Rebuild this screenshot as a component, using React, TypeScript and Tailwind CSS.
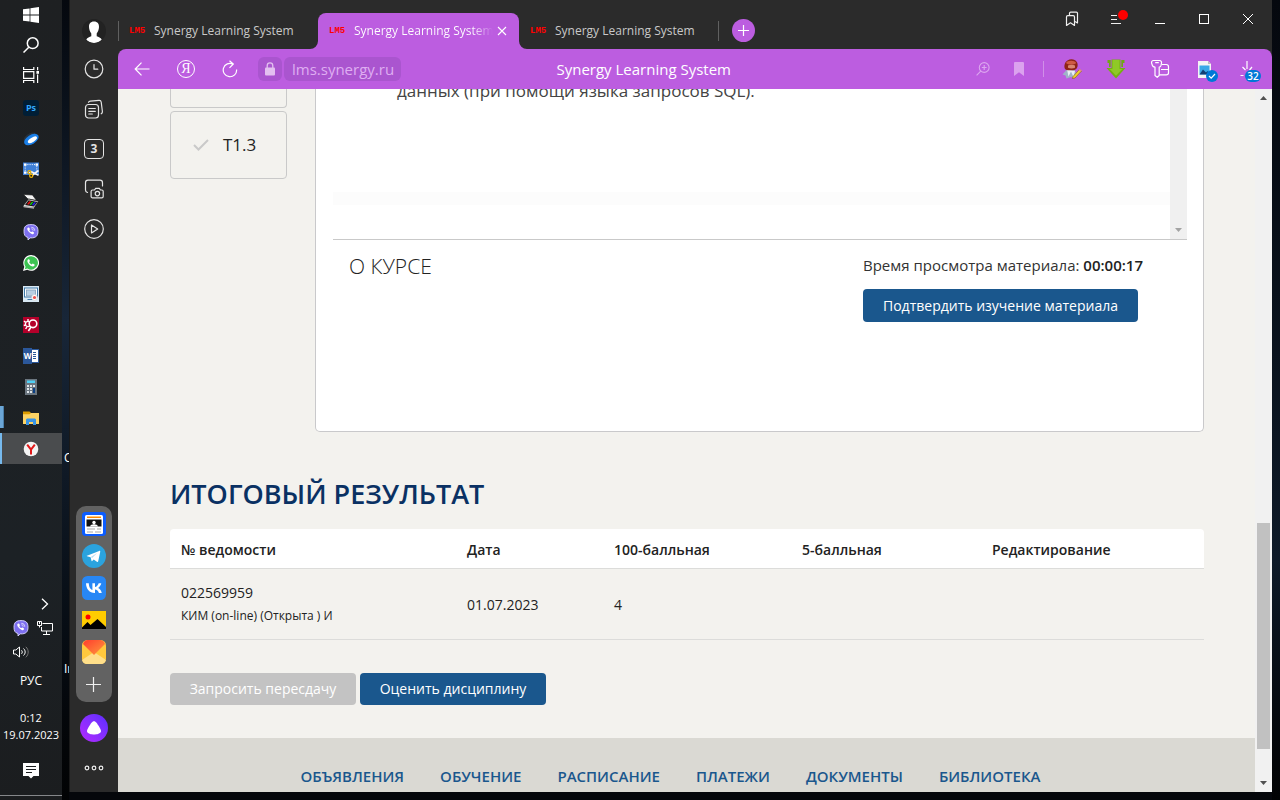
import React from "react";

const UI = "font-['Open_Sans','Noto_Sans',sans-serif]";

type IconProps = { className?: string };

/* ---------- taskbar icons ---------- */

const WindowsLogo = () => (
  <svg viewBox="0 0 16 16" className="size-4" fill="#fff">
    <path d="M0 2.3 6.6 1.4v6.2H0zM7.4 1.3 16 0v7.6H7.4zM0 8.4h6.6v6.2L0 13.7zM7.4 8.4H16V16l-8.6-1.2z" />
  </svg>
);
const SearchGlass = () => (
  <svg viewBox="0 0 16 16" className="size-4" fill="none" stroke="#fff" strokeWidth="1.5">
    <circle cx="9.7" cy="6.2" r="5.4" />
    <path d="M5.8 10.2.5 15.5" />
  </svg>
);
const TaskView = () => (
  <svg viewBox="0 0 16 16" className="size-4" fill="none" stroke="#fff" strokeWidth="1.2">
    <path d="M.6 0v2.5h10.2V0M.6 16v-2.5h10.2V16M.6 4.6h10.2v6.8H.6zM14.6 0v3.2M14.6 7.6V16" />
    <rect x="13.4" y="4" width="2.6" height="2.8" fill="#fff" stroke="none" />
  </svg>
);
const Photoshop = () => (
  <span className="flex size-4 items-center justify-center rounded-[3px] bg-[#001e36] text-[9px] font-bold leading-none text-[#31a8ff]">
    Ps
  </span>
);
const YandexDisk = () => (
  <svg viewBox="0 0 16 16" className="size-4">
    <ellipse cx="7" cy="6.6" rx="7" ry="4" transform="rotate(-32 7 6.6)" fill="#26303b" />
    <ellipse cx="8.4" cy="8.6" rx="8" ry="4.6" transform="rotate(-32 8.4 8.6)" fill="#1a7fe8" />
    <ellipse cx="9.4" cy="8.8" rx="5.2" ry="2.2" transform="rotate(-32 9.4 8.8)" fill="#fff" />
  </svg>
);
const Snip = () => (
  <svg viewBox="0 0 16 16" className="size-4">
    <rect y=".5" width="16" height="12.5" fill="#3f7fd6" />
    <rect x="2.2" y="2.6" width="11.6" height="8" fill="none" stroke="#fff" strokeDasharray="1 1.2" />
    <path d="M1 1.4h2.4v2.4H1zM12.6 1.4H15v2.4h-2.4zM1 9.4h2.4v2.4H1z" fill="#fff" />
    <path d="m8 9.500 7.500 3.900M9.500 13l6-4.500" stroke="#f4f4f4" strokeWidth="1.6" />
    <circle cx="6.4" cy="10.200" r="1.5" fill="none" stroke="#f0b400" strokeWidth="1.200" />
    <circle cx="8.2" cy="13.800" r="1.6" fill="none" stroke="#f0b400" strokeWidth="1.200" />
  </svg>
);
const Scanner = () => (
  <svg viewBox="0 0 16 16" className="size-4">
    <path d="M.5 1.500 9.500 2 13.500 7.500 5 6z" fill="#f4f4f4" stroke="#111" strokeWidth=".6" />
    <path d="m.5 12.500 5-6.500 10 2.200-4.500 6.800L.5 14z" fill="#e4e4e4" stroke="#111" strokeWidth=".6" />
    <path d="M2 12 5.500 7.200l9 1.800-3.700 4.600z" fill="#151515" />
    <path d="m4 11.200 2.400-3 1.800.4-2.400 2.900z" fill="#e11" />
    <path d="m6.500 11.700 2.400-3 1.500.3-2.300 3z" fill="#1c1" />
    <path d="m8.900 12.100 2.300-2.900 1.800.4-2.400 2.900z" fill="#22e" />
    <path d="m.5 13 10.500 1.200v1.500L.5 14.200z" fill="#aaa" />
  </svg>
);
const Viber = ({ className = "size-4" }: IconProps) => (
  <svg viewBox="0 0 16 16" className={className}>
    <path
      d="M8 .6c4.800 0 7 1.700 7 6.600s-2.200 6.700-7 6.700h-.8L5 16v-2.500C2 12.800 1 10.800 1 7.200 1 2.300 3.200.6 8 .6z"
      fill="#7d6ff0"
      stroke="#dcd8ff"
      strokeWidth=".9"
    />
    <path
      d="M5.300 3.600c.5-.3.900 0 1.500 1.100.3.600 0 .9-.4 1.300-.3.500 1.300 2.300 1.900 2 .5-.3.700-.8 1.300-.5 1.300.7 1.700 1.100 1.400 1.700-.5 1-1.200 1.400-2.200.9-2.300-1-4.200-3.100-4.600-5 0-.7.400-1.200 1.100-1.500z"
      fill="#fff"
    />
    <path d="M8.300 3.300c2.300 0 3.400 1.300 3.400 3.400M8.400 4.800c1.200 0 1.800.7 1.800 1.800" fill="none" stroke="#fff" strokeWidth=".7" />
  </svg>
);
const WhatsApp = () => (
  <svg viewBox="0 0 16 16" className="size-4">
    <path d="M8.100 0A7.900 7.900 0 0 0 1.300 11.800L0 16l4.300-1.200A7.900 7.900 0 1 0 8.100 0z" fill="#fff" />
    <path d="M8.100 1.200a6.700 6.700 0 0 0-5.500 10.500l-.8 2.500 2.600-.8A6.700 6.700 0 1 0 8.100 1.200z" fill="#3cc352" />
    <path
      d="M5.400 4.300c.5-.2.900-.1 1.200.8l.3.900c0 .4-.8.900-.7 1.200.5 1 1.400 1.800 2.400 2.200.4.100.8-.9 1.200-.8l1.700.8c.3.300 0 1.300-.4 1.600-1.200 1-3.300 0-4.700-1.300C5 8.400 4.100 6.800 4.400 5.600c.2-.6.500-1.100 1-1.300z"
      fill="#fff"
    />
  </svg>
);
const ScreenRec = () => (
  <svg viewBox="0 0 16 16" className="size-4">
    <rect width="16" height="16" fill="#d9e9f4" />
    <rect x="1.500" y="2" width="13" height="9" fill="#fff" stroke="#3d78a8" />
    <rect x="3.500" y="4" width="9" height="6" fill="#b8cfe2" stroke="#7d9cb8" strokeWidth=".8" />
    <path d="M4.500 13.500h6" stroke="#3d78a8" />
    <circle cx="11.500" cy="11.500" r="2.900" fill="#fff" stroke="#c8c8c8" strokeWidth=".6" />
    <circle cx="11.500" cy="11.500" r="1.600" fill="#e8514b" />
  </svg>
);
const GearBox = () => (
  <svg viewBox="0 0 16 16" className="size-4">
    <rect width="16" height="16" fill="#b4002a" />
    <circle cx="5" cy="7" r="2.600" fill="none" stroke="#fff" strokeWidth="1.300" />
    <path d="M5 2v2M1 4l1.600 1.400M.8 8.500l2-.5M2.600 12l1.200-1.900" stroke="#fff" strokeWidth="1.400" />
    <circle cx="10" cy="6.800" r="3.800" fill="#b4002a" stroke="#fff" strokeWidth="1.600" />
    <path d="m8 10-2.600 4" stroke="#fff" strokeWidth="1.600" />
  </svg>
);
const Word = () => (
  <span className="flex h-4 w-4 items-center">
    <span className="flex h-4 w-[9px] items-center justify-center bg-[#2b579a] text-[8px] font-bold leading-none text-white">W</span>
    <span className="flex h-[14px] flex-1 flex-col justify-between border border-l-0 border-[#2b579a] bg-white py-0.5 pl-px pr-0.5">
      <span className="h-px bg-[#2b579a]" />
      <span className="h-px bg-[#2b579a]" />
      <span className="h-px bg-[#2b579a]" />
      <span className="h-px bg-[#2b579a]" />
    </span>
  </span>
);
const Calc = () => (
  <svg viewBox="0 0 12 16" className="h-4 w-3">
    <rect width="12" height="16" fill="#6b7680" />
    <rect x="2" y="1.500" width="8" height="2.500" fill="#4fd0f5" />
    <path d="M2 6h2v2H2zM5 6h2v2H5zM8 6h2v2H8zM2 9h2v2H2zM5 9h2v2H5zM2 12h2v2H2zM5 12h2v2H5z" fill="#dfe5ea" />
    <path d="M8 9h2v5H8z" fill="#0b3f83" />
  </svg>
);
const Folder = () => (
  <svg viewBox="0 0 16 14" className="h-3.5 w-4">
    <path d="M0 2h16v11H0z" fill="#fdd364" />
    <path d="M0 .5h6.500L8 2 6.500 3.200H0z" fill="#dd9c00" />
    <path d="M3 14V8.500L4 7.500h8l1 1V14h-3v-3H6v3z" fill="#3a94e4" />
  </svg>
);
const YBrowser = () => (
  <svg viewBox="0 0 16 16" className="size-4">
    <circle cx="8" cy="8" r="7.300" fill="#f4f4f4" />
    <path d="M4.200 3.600 8 8.600v4.900M11.800 3.600 8 8.600" fill="none" stroke="#e0191a" strokeWidth="2" />
  </svg>
);

const taskApps: { name: string; icon: React.ReactNode; state?: "open" | "active" }[] = [
  { name: "Photoshop", icon: <Photoshop /> },
  { name: "Диск", icon: <YandexDisk /> },
  { name: "Ножницы", icon: <Snip /> },
  { name: "Сканер", icon: <Scanner /> },
  { name: "Viber", icon: <Viber /> },
  { name: "WhatsApp", icon: <WhatsApp /> },
  { name: "Запись экрана", icon: <ScreenRec /> },
  { name: "Настройка", icon: <GearBox /> },
  { name: "Word", icon: <Word /> },
  { name: "Калькулятор", icon: <Calc /> },
  { name: "Проводник", icon: <Folder />, state: "open" },
  { name: "Браузер", icon: <YBrowser />, state: "active" },
];

function Taskbar() {
  return (
    <nav aria-label="Панель задач" className="flex w-[62px] shrink-0 flex-col bg-linear-to-b from-[#1e2022] via-[#1c2125] via-70% to-[#1b1d1f] text-white">
      {[
        { name: "Пуск", icon: <WindowsLogo /> },
        { name: "Поиск", icon: <SearchGlass /> },
        { name: "Представление задач", icon: <TaskView /> },
      ].map((b) => (
        <button key={b.name} aria-label={b.name} className="flex h-[30px] items-center justify-center">
          {b.icon}
        </button>
      ))}
      <div className="mt-0.5 flex flex-col">
        {taskApps.map((a) => (
          <button
            key={a.name}
            aria-label={a.name}
            className={
              a.state === "active"
                ? "flex h-[31px] items-center justify-center border-l-2 border-[#76b9ed] bg-[#4a4c4e] pr-0.5"
                : "relative flex h-[31px] items-center justify-center"
            }
          >
            {a.state === "open" && <span className="absolute left-0 top-1 h-[22px] w-1 border-r border-[#4b7ea8] bg-[#6ba6d6]" />}
            {a.icon}
          </button>
        ))}
      </div>

      <div className="mt-auto flex flex-col items-center">
        <button aria-label="Скрытые значки" className="ml-7 flex h-6 items-center">
          <svg viewBox="0 0 8 12" className="h-3 w-2" fill="none" stroke="#fff" strokeWidth="1.300">
            <path d="m1 .8 5.500 5.200L1 11.200" />
          </svg>
        </button>
        <div className="flex h-6 items-center gap-2 pl-1">
          <Viber />
          <svg viewBox="0 0 16 14" className="h-3.5 w-4" fill="none" stroke="#fff">
            <path d="M5.500 2.500h10v7.500h-11V6M9.500 10v3M6 13.500h7M.5.500h4v4h-4zM2.500 4.500v2M2.500 0v3" />
          </svg>
        </div>
        <div className="flex h-6 items-center pr-5">
          <svg viewBox="0 0 17 12" className="h-3 w-[17px]" fill="none" stroke="#fff">
            <path d="M.5 4h2.300l3.700-3v10L2.800 8H.500zM8.500 4.300c1 1 1 2.500 0 3.500M10.500 2.500c2.200 2 2.200 5 0 7" />
            <path d="M12.800.8c3.200 3 3.200 7.500 0 10.500" stroke="#777" />
          </svg>
        </div>
        <span className="mt-px text-[12px] leading-8">РУС</span>
        <div className="mt-3 flex flex-col items-center text-[11px] leading-[17px]">
          <span>0:12</span>
          <span>19.07.2023</span>
        </div>
        <button aria-label="Уведомления" className="mt-5 flex h-4">
          <svg viewBox="0 0 16 16" className="size-4">
            <path d="M0 0h16v13h-5.500L8 15.500 5.500 13H0z" fill="#fff" />
            <path d="M3 3.500h10M3 6.500h10M3 9.500h6" stroke="#1b1d1f" />
          </svg>
        </button>
        <span className="mb-1 mt-4 h-px w-full bg-[#85878a]" />
      </div>
    </nav>
  );
}

/* ---------- browser side panel ---------- */

const SideIcon = ({ children }: { children: React.ReactNode }) => (
  <svg viewBox="0 0 20 20" className="size-5" fill="none" stroke="#e4e4e4" strokeWidth="1.200" strokeLinecap="round" strokeLinejoin="round">
    {children}
  </svg>
);

const sideTools = [
  {
    name: "История",
    icon: (
      <SideIcon>
        <circle cx="10" cy="10" r="8.800" />
        <path d="M10 5.500v4.700h3.800" />
      </SideIcon>
    ),
  },
  {
    name: "Коллекции",
    icon: (
      <SideIcon>
        <rect x="1.500" y="5.500" width="13" height="13.500" rx="3" />
        <path d="M4.500 3.300c.4-.7 1-1 1.800-1.100l8.700-.9c1.300-.1 2 .5 2.200 1.700l1.200 9.500c.1 1-.3 1.800-1.200 2.300M4.800 9.500h6.500M4.800 12.300h6.500M4.800 15h3.500" />
      </SideIcon>
    ),
  },
  {
    name: "Вкладки",
    icon: <span className="flex size-5 items-center justify-center rounded-[4px] border border-[#e4e4e4] text-[12px] font-bold leading-none text-[#e4e4e4]">3</span>,
  },
  {
    name: "Скриншот",
    icon: (
      <SideIcon>
        <path d="M3.500 13.500c-1.300-.4-2-1.200-2-2.600V3.800C1.500 2.200 2.400 1.200 4 1.200h12c1.600 0 2.500 1 2.500 2.600V7" />
        <path d="M8.500 11h2l1.200-1.700h3.600l1.200 1.700h1.300c.8 0 1.400.6 1.400 1.400v5c0 .8-.6 1.400-1.400 1.400H8.500c-.8 0-1.400-.6-1.400-1.400v-5c0-.8.6-1.400 1.400-1.400z" />
        <circle cx="13.400" cy="14.600" r="2.200" />
      </SideIcon>
    ),
  },
  {
    name: "Видео",
    icon: (
      <SideIcon>
        <circle cx="10" cy="10" r="9.300" />
        <path d="M7.500 6v8l6.200-4z" />
      </SideIcon>
    ),
  },
];

const dockApps = [
  {
    name: "Новости",
    icon: (
      <svg viewBox="0 0 24 24" className="size-6">
        <rect width="24" height="24" rx="3.500" fill="#0b5cff" />
        <rect x="3" y="3" width="18" height="19" rx="1.500" fill="#fff" />
        <path d="M5 4.500h14V6H5z" fill="#ff8a00" />
        <path d="M4.500 7.500h15v7h-15z" fill="#111" />
        <circle cx="12" cy="10.500" r="1.700" fill="#fff" />
        <path d="M8 14.500c.5-3 7.500-3 8 0z" fill="#fff" />
        <path d="M5 17h8M5 20h6M15 17h4M13 20h6" stroke="#aaa" strokeWidth="1.200" />
      </svg>
    ),
  },
  {
    name: "Telegram",
    icon: (
      <svg viewBox="0 0 24 24" className="size-6">
        <circle cx="12" cy="12" r="12" fill="#2ba3de" />
        <path d="m5 11.800 12.200-4.900c.7-.2 1.200.2 1 1.100l-2 9.300c-.2.800-.7.900-1.300.5l-3.200-2.300-1.500 1.500c-.3.300-.6.300-.7-.2l-.9-3.500-3.500-1c-.6-.2-.6-.4-.1-.5z" fill="#fff" />
        <path d="m8.800 13 6.700-4.200-5.400 5.300z" fill="#b8dcf0" />
      </svg>
    ),
  },
  {
    name: "ВКонтакте",
    icon: (
      <svg viewBox="0 0 24 24" className="size-6">
        <rect width="24" height="24" rx="5.500" fill="#2787f5" />
        <path
          d="M12.800 17C7.400 17 4.200 13.300 4 7.300h2.800c.1 4.400 2 6.200 3.600 6.600V7.300H13v3.800c1.500-.2 3.200-1.900 3.700-3.800h2.600c-.4 2.200-2 3.900-3.200 4.600 1.200.5 3 2 3.700 5.100h-2.900c-.6-1.900-2.100-3.200-3.900-3.400V17z"
          fill="#fff"
        />
      </svg>
    ),
  },
  {
    name: "Картинки",
    icon: (
      <svg viewBox="0 0 24 24" className="size-6">
        <path d="M0 3h24v18H0z" fill="#fc0" />
        <path d="M0 21v-1.500L5.500 14l3 3L15.500 11 24 19v2z" fill="#000" />
        <circle cx="6" cy="9" r="2.500" fill="#f00" />
      </svg>
    ),
  },
  {
    name: "Почта",
    icon: (
      <svg viewBox="0 0 24 24" className="size-6">
        <defs>
          <linearGradient id="mail" x1="0" y1="0" x2="1" y2="1">
            <stop offset="0" stopColor="#ff3d2e" />
            <stop offset="1" stopColor="#ff9a3d" />
          </linearGradient>
        </defs>
        <rect width="24" height="24" rx="5.500" fill="#ffc83d" />
        <path d="M0 20 12 12 24 20a5.500 5.500 0 0 1-5.500 4h-13A5.500 5.500 0 0 1 0 20z" fill="#ffdf8a" />
        <path d="M1 4A5.500 5.500 0 0 1 5.500 0h13A5.500 5.500 0 0 1 23 4L12 15z" fill="url(#mail)" />
      </svg>
    ),
  },
  {
    name: "Добавить",
    icon: (
      <svg viewBox="0 0 24 24" className="size-6" stroke="#f0f0f0" strokeWidth="1.200">
        <path d="M11.500 5v15M4 12.500h15" />
      </svg>
    ),
  },
];

function SidePanel() {
  return (
    <aside className="flex w-12 shrink-0 flex-col items-center bg-[#2b2b2b]">
      <button aria-label="Профиль" className="mt-[19px] flex size-6 items-center justify-center overflow-hidden rounded-full bg-[#222]">
        <svg viewBox="0 0 24 24" className="size-6" fill="#fff">
          <path d="M12 2.500c3.600 0 5.200 2.300 5 5.600-.1 2.600-.9 4.800-2.300 6.400v2.800c1.800.8 4 1.500 5 3.200C17.800 22.800 15 24 12 24s-5.800-1.200-7.700-3.500c1-1.700 3.200-2.400 5-3.200v-2.800C7.900 12.900 7.100 10.700 7 8.100c-.2-3.300 1.400-5.600 5-5.600z" />
        </svg>
      </button>
      <div className="mt-4 flex flex-col gap-5">
        {sideTools.map((t) => (
          <button key={t.name} aria-label={t.name} className="flex size-5 items-center justify-center">
            {t.icon}
          </button>
        ))}
      </div>
      <div className="mt-auto flex w-9 flex-col items-center gap-2 rounded-[10px] bg-[#626262] px-1.5 py-1.5">
        {dockApps.map((a) => (
          <button key={a.name} aria-label={a.name} className="flex size-6">
            {a.icon}
          </button>
        ))}
      </div>
      <button aria-label="Алиса" className="mt-3 flex size-7 items-center justify-center rounded-full bg-linear-to-bl from-[#5a2bff] to-[#b425ff]">
        <svg viewBox="0 0 14 14" className="size-3.5" fill="#fff">
          <path d="M7 .3c1 0 1.800.6 2.500 1.500 1.500 2 4.500 6.400 4.500 8.400 0 2.400-4.500 3.300-7 3.300s-7-.9-7-3.300c0-2 3-6.400 4.500-8.400C5.200.9 6 .3 7 .3z" />
        </svg>
      </button>
      <button aria-label="Ещё" className="mb-[21px] mt-[23px] flex">
        <svg viewBox="0 0 20 6" className="h-1.5 w-5" fill="none" stroke="#f0f0f0" strokeWidth="1.200">
          <circle cx="3" cy="3" r="1.800" />
          <circle cx="10" cy="3" r="1.800" />
          <circle cx="17" cy="3" r="1.800" />
        </svg>
      </button>
    </aside>
  );
}

/* ---------- tabs and toolbar ---------- */

const Favicon = () => (
  <span className="w-4 shrink-0 font-['Liberation_Mono',monospace] text-[9px] font-bold leading-none text-[#f00]">LM5</span>
);

function Tab({ active = false }: { active?: boolean }) {
  return (
    <div
      role="tab"
      aria-selected={active}
      className={
        active
          ? "relative mt-[13px] flex w-[201px] items-center rounded-t-[8px] bg-[#bc5de0] pl-[11px] pr-3 text-white"
          : "mt-[13px] flex w-[200px] items-center pl-[11px] text-[#c9c9c9]"
      }
    >
      {active && (
        <>
          <svg viewBox="0 0 8 8" className="absolute -left-2 bottom-0 size-2" fill="#bc5de0">
            <path d="M8 0v8H0a8 8 0 0 0 8-8z" />
          </svg>
          <svg viewBox="0 0 8 8" className="absolute -right-2 bottom-0 size-2" fill="#bc5de0">
            <path d="M0 0v8h8a8 8 0 0 1-8-8z" />
          </svg>
        </>
      )}
      <Favicon />
      <span
        className={
          active
            ? "ml-[9px] min-w-0 flex-1 overflow-hidden whitespace-nowrap bg-linear-to-r from-white from-85% to-transparent bg-clip-text text-[12px] leading-5 text-transparent"
            : "ml-[9px] whitespace-nowrap text-[12px] leading-5"
        }
      >
        Synergy Learning System
      </span>
      {active && (
        <button aria-label="Закрыть вкладку" className="ml-1 flex">
          <svg viewBox="0 0 10 10" className="size-2.5" stroke="#fff" strokeWidth="1.100">
            <path d="m1 1 8 8M9 1 1 9" />
          </svg>
        </button>
      )}
    </div>
  );
}

function TabStrip() {
  return (
    <header className="flex h-[49px] shrink-0 bg-[#2b2b2b]">
      <div className="flex" role="tablist">
        <span className="-mr-px mt-[21px] h-5 w-px bg-[#606060]" />
        <Tab />
        <Tab active />
        <Tab />
      </div>
      <span className="-ml-px mt-[21px] h-5 w-px bg-[#606060]" />
      <button aria-label="Новая вкладка" className="ml-[13px] mt-[19px] flex size-[23px] items-center justify-center rounded-full bg-[#bc5de0]">
        <svg viewBox="0 0 11 11" className="size-[11px]" stroke="#fff" strokeWidth="1.200">
          <path d="M5.500 0v11M0 5.500h11" />
        </svg>
      </button>
      <div className="ml-auto flex h-[38px] pr-0.5">
        <button aria-label="Закладки" className="flex w-11 items-center justify-center">
          <svg viewBox="0 0 14 16" className="h-4 w-3.5" fill="none" stroke="#f0f0f0" strokeWidth="1.200" strokeLinejoin="round">
            <path d="M4.500 4V2.300c0-.7.400-1.200 1.200-1.200h5.600c.8 0 1.200.5 1.200 1.200V12L10 10.600" />
            <path d="M1.500 6c0-.8.500-1.300 1.300-1.300h5.400c.8 0 1.300.5 1.300 1.300v8.400l-4-2.600-4 2.600z" />
          </svg>
        </button>
        <button aria-label="Меню" className="relative flex w-11 items-center justify-center">
          <svg viewBox="0 0 10 9" className="mt-px h-[9px] w-2.5" stroke="#f0f0f0">
            <path d="M0 .5h6M0 4.500h6M0 8.500h10" />
          </svg>
          <span className="absolute right-2.5 top-2.5 size-2.5 rounded-full bg-[#f00]" />
        </button>
        <button aria-label="Свернуть" className="flex w-11 items-center justify-center">
          <span className="mt-2 h-px w-2.5 bg-white" />
        </button>
        <button aria-label="Развернуть" className="flex w-11 items-center justify-center">
          <span className="size-2.5 border border-white" />
        </button>
        <button aria-label="Закрыть" className="flex w-11 items-center justify-center">
          <svg viewBox="0 0 10 10" className="size-2.5" stroke="#fff">
            <path d="m0 0 10 10M10 0 0 10" />
          </svg>
        </button>
      </div>
    </header>
  );
}

function Toolbar() {
  return (
    <div className="flex h-10 shrink-0 items-center rounded-t-[8px] bg-[#bc5de0] pr-0.5 text-white">
      <div className="flex pl-0.5">
        <button aria-label="Назад" className="flex size-11 items-center justify-center">
          <svg viewBox="0 0 16 14" className="h-3.5 w-4" fill="none" stroke="#fff" strokeWidth="1.200">
            <path d="M15.500 7H1.200M7.500.7 1.200 7l6.300 6.300" />
          </svg>
        </button>
        <button aria-label="Яндекс" className="flex size-11 items-center justify-center">
          <span className="flex size-[18px] items-center justify-center rounded-full border border-white font-['Liberation_Serif',serif] text-[14px] leading-none">Я</span>
        </button>
        <button aria-label="Обновить" className="flex size-11 items-center justify-center">
          <svg viewBox="0 0 16 18" className="h-[18px] w-4" fill="none" stroke="#fff" strokeWidth="1.200">
            <path d="M14.600 9.500A6.700 6.700 0 1 1 11 4.100M7.500.8 11.300 4 7.500 7.800" />
          </svg>
        </button>
      </div>
      <button aria-label="Защищённое соединение" className="ml-1.5 flex size-6 items-center justify-center rounded-md bg-[#aa55cf]">
        <svg viewBox="0 0 10 14" className="h-3.5 w-2.5" fill="#e3c0f0">
          <rect y="5.500" width="10" height="8" rx="1" />
          <path d="M2.200 6V3.700a2.800 2.800 0 0 1 5.600 0V6" fill="none" stroke="#e3c0f0" strokeWidth="1.300" />
        </svg>
      </button>
      <a href="#url" className="ml-0.5 flex h-6 w-[117px] items-center rounded-md bg-[#aa55cf] pl-2 text-[15px] leading-6 text-[#dfaef2]">
        lms.synergy.ru
      </a>
      <span className="ml-auto pl-4 text-[15px] leading-6">Synergy Learning System</span>
      <div className="ml-[234px] flex h-10 items-center">
        <button aria-label="Масштаб" className="flex w-9 items-center justify-center">
          <svg viewBox="0 0 14 14" className="size-3.5" fill="none" stroke="#dca6ef" strokeWidth="1.100">
            <circle cx="8.200" cy="5.500" r="4.900" />
            <path d="M4.700 9.200.6 13.400M5.800 5.500h4.800M8.200 3.100v4.800" />
          </svg>
        </button>
        <button aria-label="Добавить закладку" className="flex w-9 items-center justify-center">
          <svg viewBox="0 0 10 14" className="h-3.5 w-2.5" fill="#dba2ee">
            <path d="M0 1.200C0 .5.500 0 1.200 0h7.600C9.500 0 10 .5 10 1.200V14L5 10.200 0 14z" />
          </svg>
        </button>
        <span className="mx-1.5 h-4 w-px bg-[#d08fe8]" />
        <button aria-label="Расширение" className="flex w-11 items-center justify-center">
          <svg viewBox="0 0 20 20" className="size-5">
            <path d="M.5 15.500 4.500 11h8l3 6-3.500 2-3-1-4.500 1.500-1-3z" fill="#9fb2c8" />
            <path d="m5 10.500 1.500 7 2.500-5 2.500 5.500 1.500-6z" fill="#e9eef5" />
            <path d="M2.500 8.500C2 5.500 3.500.3 9.500.2c5 0 6.800 4 6 7.300-.6 2.600-2.500 3.700-4.500 3.700H6c-2 0-3.200-1-3.500-2.700z" fill="#8f2417" />
            <path d="M4 4C5 1.300 12.500.8 14.200 4c-2 2-8 2-10.200 0z" fill="#cf5a43" />
            <path d="M6 6.500c2-1 5-1 7 0v2.300c-2 .8-5 .8-7 0z" fill="#d98670" />
            <path d="m11 17.500 6.500-7.200 2 1.700L13 19l-2.600.6z" fill="#f2cc2e" stroke="#7a6310" strokeWidth=".6" />
            <path d="m16.700 11 1-1.200 2.100 1.800-1 1.200z" fill="#e58a8a" />
          </svg>
        </button>
        <button aria-label="Загрузить" className="flex w-11 items-center justify-center">
          <svg viewBox="0 0 20 20" className="size-5">
            <path d="M1.500 1h3.200v7H3V4H1.500zM18.500 1h-3.200v7H17V4h1.500z" fill="#6fa814" />
            <path d="M5.500.5h9v8.500h5L10 19.500.5 9h5z" fill="#74b013" />
            <path d="M6.500 1h7v9h2.800L10 16.800 3.700 10h2.800z" fill="#8fc926" />
          </svg>
        </button>
        <button aria-label="Пароли" className="flex w-11 items-center justify-center">
          <svg viewBox="0 0 20 20" className="size-5" fill="none" stroke="#fff" strokeWidth="1.200" strokeLinejoin="round">
            <path d="M3.500 1.500h6c1.500 0 2.300 1.200 2 2.600l-.5 2.400c-.2 1-.8 1.500-1.800 1.700v8.300l-2 1.800-2.200-1.800V8.200c-1.500-.2-2.300-.8-2.600-1.700l-.8-2.400c-.3-1.400.5-2.600 1.900-2.600zM5.200 3.600h3.600" />
            <path d="M11.700 5.500h4.500c1.500 0 2.300.8 2.300 2.200v6c0 1.400-.8 2.100-2.300 2.100H9.500M11 10.500h7.500" />
          </svg>
        </button>
        <button aria-label="Изображение" className="relative flex w-11 items-center justify-center">
          <svg viewBox="0 0 13 17" className="h-[17px] w-[13px]">
            <path d="M0 0h10l3 3v14H0z" fill="#f4f4f4" />
            <path d="M10 0v3h3z" fill="#bbb" />
            <path d="M1.500 4.500h10v9h-10z" fill="#39a9e8" />
            <path d="m1.500 13.500 3.500-5 3 3 1.500-1.500 2 3.500z" fill="#123f73" />
          </svg>
          <span className="absolute -bottom-1 left-6 flex size-3 items-center justify-center rounded-full bg-[#0078d7]">
            <svg viewBox="0 0 8 8" className="size-2" fill="none" stroke="#fff" strokeWidth="1.200">
              <path d="m1 4 2.200 2.200L7 2" />
            </svg>
          </span>
        </button>
        <button aria-label="Загрузки" className="relative flex w-11 items-center justify-center">
          <svg viewBox="0 0 16 18" className="h-[18px] w-4" fill="none" stroke="#fff" strokeWidth="1.200">
            <path d="M7 1v8M2.500 7l3 3M12 7l-2.500 3M.5 15.500h3" />
          </svg>
          <span className="absolute -bottom-1 left-[19px] flex h-3 w-4 items-center justify-center rounded-full bg-[#0078d7] text-[10px] font-semibold leading-none">32</span>
        </button>
      </div>
    </div>
  );
}

/* ---------- LMS page ---------- */

const footerLinks = ["ОБЪЯВЛЕНИЯ", "ОБУЧЕНИЕ", "РАСПИСАНИЕ", "ПЛАТЕЖИ", "ДОКУМЕНТЫ", "БИБЛИОТЕКА"];

function CourseArea() {
  return (
    <section className="flex gap-7">
      <div className="flex w-[117px] shrink-0 flex-col gap-[3px]">
        <div className="h-[19px] rounded-b-[4px] border border-t-0 border-[#c9c9c9]" />
        <a href="#t13" className="flex h-[68px] items-center rounded-[4px] border border-[#c9c9c9] pl-[22px] text-[17px] font-medium text-[#222]">
          <svg viewBox="0 0 16 12" className="mr-3.5 h-3 w-4" fill="none" stroke="#c9c9c9" strokeWidth="2">
            <path d="m1 6 4.500 4.500L15 1" />
          </svg>
          Т1.3
        </a>
      </div>
      <div className="h-[343px] min-w-0 flex-1 rounded-b-[5px] border border-t-0 border-[#c9c9cb] bg-white pl-[17px] pr-4">
        <div className="flex h-[151px] border-b border-[#c9c9c9]">
          <div className="flex flex-1 flex-col">
            <p className="-mt-3 pl-16 text-[17px] leading-7 text-[#444]">данных (при помощи языка запросов SQL).</p>
            <div className="mb-[34px] mt-auto h-[13px] bg-[#fcfcfc]" />
          </div>
          <div className="flex w-[17px] items-end justify-center bg-[#f0f0f0] pb-[7px]">
            <svg viewBox="0 0 7 4" className="h-1 w-[7px]" fill="#a3a3a3">
              <path d="M0 0h7L3.500 4z" />
            </svg>
          </div>
        </div>
        <div className="flex justify-between pl-4 pr-11">
          <h2 className="pt-2 text-[21px] font-light leading-9 text-[#222]">О КУРСЕ</h2>
          <div className="flex flex-col items-start pt-[11px]">
            <p className="text-[15px] leading-7 text-[#333]">
              Время просмотра материала: <b className="font-semibold text-[#222]">00:00:17</b>
            </p>
            <button className="mt-2.5 h-[33px] rounded-[4px] bg-[#1a578d] px-5 pb-px text-[14px] text-white">Подтвердить изучение материала</button>
          </div>
        </div>
      </div>
    </section>
  );
}

function Results() {
  return (
    <section className="mt-[43px]">
      <h1 className="text-[27px] font-semibold leading-[38px] text-[#0a3163]">ИТОГОВЫЙ РЕЗУЛЬТАТ</h1>
      <table className="mt-4 w-full table-fixed border-separate border-spacing-0 text-left text-[14px] text-[#222]">
        <colgroup>
          <col className="w-[286px]" />
          <col className="w-[147px]" />
          <col className="w-[188px]" />
          <col className="w-[190px]" />
          <col />
        </colgroup>
        <thead>
          <tr className="h-10 bg-white">
            {["№ ведомости", "Дата", "100-балльная", "5-балльная", "Редактирование"].map((h) => (
              <th key={h} className="border-b border-[#dcdcda] px-[11px] pt-0.5 font-semibold first:rounded-tl-[4px] last:rounded-tr-[4px]">
                {h}
              </th>
            ))}
          </tr>
        </thead>
        <tbody>
          <tr className="h-[71px]">
            <td className="border-b border-[#dcdcda] px-[11px]">
              <div className="leading-6">022569959</div>
              <div className="text-[12px] leading-[22px]">КИМ (on-line) (Открыта ) И</div>
            </td>
            <td className="border-b border-[#dcdcda] px-[11px]">01.07.2023</td>
            <td className="border-b border-[#dcdcda] px-[11px]">4</td>
            <td className="border-b border-[#dcdcda] px-[11px]" />
            <td className="border-b border-[#dcdcda] px-[11px]" />
          </tr>
        </tbody>
      </table>
      <div className="mt-[33px] flex gap-1">
        <button disabled className="h-8 w-[186px] rounded-[4px] bg-[#c3c3c3] pb-px text-[14px] text-white">
          Запросить пересдачу
        </button>
        <button className="h-8 w-[186px] rounded-[4px] bg-[#1a578d] pb-px text-[14px] text-white">Оценить дисциплину</button>
      </div>
    </section>
  );
}

function Page() {
  return (
    <div className="flex min-h-0 flex-1">
      <main className="flex min-w-0 flex-1 flex-col overflow-hidden bg-[#f3f2ee]">
        <div className="pl-[52px] pr-[51px]">
          <CourseArea />
          <Results />
        </div>
        <footer className="mt-[33px] flex flex-1 items-start justify-center gap-9 bg-[#dad9d3] pr-8 pt-[26px] text-[15px] font-semibold leading-6 text-[#1a578d]">
          {footerLinks.map((l) => (
            <a key={l} href="#footer">
              {l}
            </a>
          ))}
        </footer>
      </main>
      <div className="flex w-[17px] shrink-0 flex-col items-center bg-[#f1f1f1] py-[7px]">
        <svg viewBox="0 0 7 4" className="h-1 w-[7px]" fill="#505050">
          <path d="M0 4h7L3.500 0z" />
        </svg>
        <div className="mb-8 mt-auto h-[226px] w-[13px] bg-[#c1c1c1]" />
        <svg viewBox="0 0 7 4" className="h-1 w-[7px]" fill="#505050">
          <path d="M0 0h7L3.500 4z" />
        </svg>
      </div>
    </div>
  );
}

export default function App() {
  return (
    <div className={`${UI} flex h-screen overflow-hidden bg-[#05070b]`}>
      <Taskbar />
      <div className="flex w-[7px] shrink-0 flex-col overflow-hidden bg-linear-to-b from-[#05080e] via-[#182638] via-40% to-[#020304] pl-0.5 pt-[448px] text-[12px] leading-5 text-white">
        <span>С</span>
        <span className="mt-[191px]">In</span>
      </div>
      <div className="mb-2 flex min-w-0 flex-1 border-l border-[#1a1a1a]">
        <SidePanel />
        <div className="flex min-w-0 flex-1 flex-col bg-[#2b2b2b]">
          <TabStrip />
          <Toolbar />
          <Page />
        </div>
      </div>
      <div className="w-2 shrink-0 bg-linear-to-b from-[#05080e] via-[#0e1a28] via-70% to-[#020304]" />
    </div>
  );
}
